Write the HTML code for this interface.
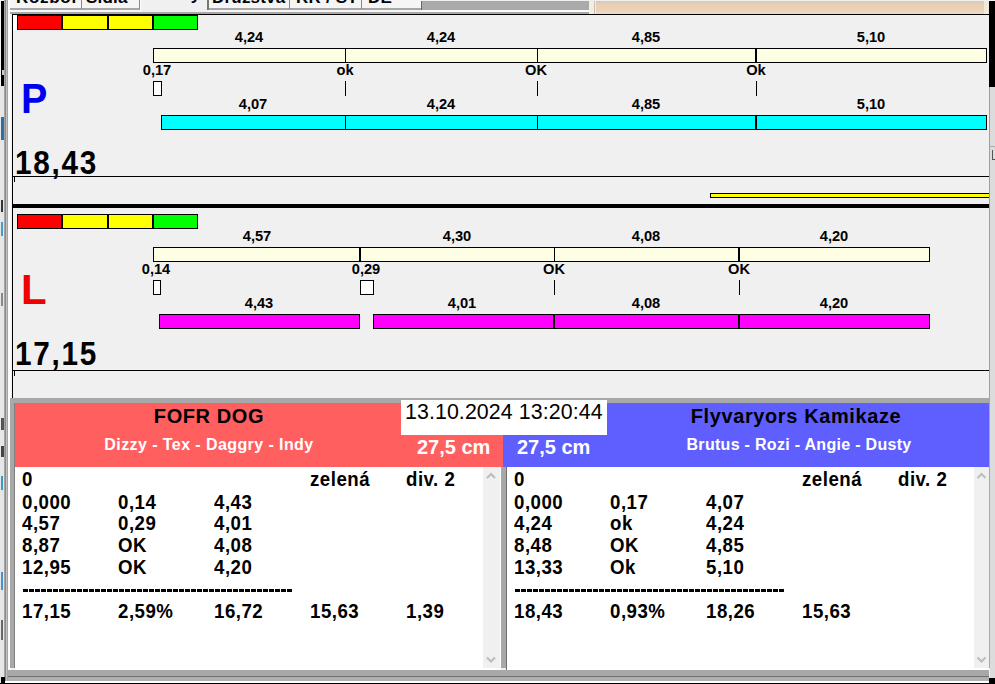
<!DOCTYPE html>
<html><head><meta charset="utf-8">
<style>
*{margin:0;padding:0;box-sizing:border-box}
html,body{width:995px;height:684px;overflow:hidden;background:#f0f0f0;font-family:"Liberation Sans",sans-serif;position:relative}
.a{position:absolute}
.t{position:absolute;white-space:nowrap;font-weight:bold;color:#000}
.c{text-align:center}
.lb{font-size:15.2px;line-height:14.67px;width:80px;text-align:center;transform:scaleX(0.965);transform-origin:50% 0}
.bar{position:absolute;border:1px solid #000}
.dv{position:absolute;width:2px;background:#000}
.tk{position:absolute;width:1px;background:#000}
.li{font-size:18.67px;line-height:20.56px;letter-spacing:0.5px;transform:scaleY(1.07);transform-origin:0 0}
.ds{letter-spacing:-0.22px}
</style></head><body>

<!-- left background strip -->
<div class="a" style="left:0;top:0;width:12px;height:684px;background:#f2f2f2"></div>
<div class="a" style="left:0;top:86px;width:5px;height:598px;background:#e4e6e8"></div>
<div class="a" style="left:1px;top:1px;width:4px;height:85px;background:#000"></div>
<div class="a" style="left:2px;top:70px;width:2px;height:5px;background:#ccc"></div>
<div class="a" style="left:1px;top:117px;width:3px;height:23px;background:#2b6fa8"></div>
<div class="a" style="left:1px;top:200px;width:2px;height:12px;background:#333"></div>
<div class="a" style="left:1px;top:222px;width:2px;height:14px;background:#4a9ad0"></div>
<div class="a" style="left:1px;top:293px;width:2px;height:13px;background:#888"></div>
<div class="a" style="left:1px;top:418px;width:3px;height:12px;background:#555"></div>
<div class="a" style="left:1px;top:446px;width:3px;height:11px;background:#444"></div>
<div class="a" style="left:1px;top:476px;width:2px;height:14px;background:#3a9ac0"></div>
<div class="a" style="left:1px;top:572px;width:2px;height:18px;background:#4a90d0"></div>
<div class="a" style="left:1px;top:620px;width:2px;height:20px;background:#666"></div>
<div class="a" style="left:4px;top:0;width:4px;height:684px;background:#a4a4a4"></div>
<div class="a" style="left:5px;top:0;width:1px;height:684px;background:#8c8c8c"></div>
<div class="a" style="left:6px;top:0;width:1px;height:684px;background:#c0c0c0"></div>
<div class="a" style="left:8px;top:0;width:3px;height:684px;background:#fbfbfb"></div>

<!-- tabs -->
<div class="a" style="left:10px;top:0;width:411px;height:12px;background:#f5f5f5"></div>
<div class="a" style="left:10px;top:8px;width:130px;height:2px;background:#a6a6a6"></div>
<div class="a" style="left:208px;top:8px;width:213px;height:2px;background:#a6a6a6"></div>
<div class="a" style="left:140px;top:0;width:68px;height:12px;background:#f0f0f0"></div>
<div class="a" style="left:140px;top:0;width:1px;height:12px;background:#fff"></div>
<div class="a" style="left:81px;top:0;width:1px;height:9px;background:#888"></div>
<div class="a" style="left:139px;top:0;width:1px;height:9px;background:#888"></div>
<div class="a" style="left:207px;top:0;width:2px;height:10px;background:#777"></div>
<div class="a" style="left:289px;top:0;width:1px;height:9px;background:#888"></div>
<div class="a" style="left:361px;top:0;width:1px;height:9px;background:#888"></div>
<div class="a" style="left:421px;top:1px;width:1px;height:9px;background:#666"></div>
<div class="a" style="left:422px;top:1px;width:167px;height:9px;background:#aaaaaa"></div>
<div class="a" style="left:421px;top:10px;width:175px;height:2px;background:#fafafa"></div>
<div class="t" style="left:16px;top:-11px;font-size:17px;line-height:17px;letter-spacing:0.7px">Rozbor</div>
<div class="t" style="left:86px;top:-11px;font-size:17px;line-height:17px;letter-spacing:0.2px">Sídla</div>
<div class="t" style="left:150px;top:-14px;font-size:17px;line-height:17px;letter-spacing:0.5px">Dráhy</div>
<div class="t" style="left:212px;top:-11px;font-size:17px;line-height:17px;letter-spacing:0.2px">Družstva</div>
<div class="t" style="left:296px;top:-11px;font-size:17px;line-height:17px;letter-spacing:0.2px">RR / ST</div>
<div class="t" style="left:368px;top:-11px;font-size:17px;line-height:17px;letter-spacing:0.2px">DE</div>

<!-- panel frame -->
<div class="a" style="left:10px;top:12px;width:980px;height:2px;background:#a8a8a8"></div>
<div class="a" style="left:589px;top:1px;width:7px;height:13px;background:#f4eee0"></div>
<div class="a" style="left:594px;top:1px;width:1px;height:13px;background:#c8c0b0"></div>
<div class="a" style="left:596px;top:1px;width:388px;height:13px;background:linear-gradient(#dcc6b8,#ead0b4 35%,#ecd2b4 65%,#e8dcd0)"></div>
<div class="a" style="left:984px;top:1px;width:5px;height:13px;background:#f0ead8"></div>
<div class="a" style="left:12px;top:14px;width:977px;height:1px;background:#000"></div>
<div class="a" style="left:12px;top:14px;width:1px;height:384px;background:#000"></div>
<div class="a" style="left:13px;top:15px;width:4px;height:15px;background:#fff"></div>
<div class="a" style="left:989px;top:14px;width:1px;height:384px;background:#a0a0a0"></div>

<!-- right black strip -->
<div class="a" style="left:989px;top:1px;width:6px;height:86px;background:#000"></div>
<div class="a" style="left:990px;top:87px;width:5px;height:597px;background:#dcdcdc"></div>
<div class="a" style="left:990px;top:146px;width:5px;height:1px;background:#aaa"></div>
<div class="a" style="left:992px;top:150px;width:1px;height:10px;background:#555"></div>
<div class="a" style="left:992px;top:159px;width:3px;height:1px;background:#555"></div>

<!-- ===== Panel P ===== -->
<div class="bar" style="left:17px;top:15px;width:45px;height:15px;background:#ff0000"></div>
<div class="bar" style="left:62px;top:15px;width:46px;height:15px;background:#ffff00"></div>
<div class="bar" style="left:108px;top:15px;width:45px;height:15px;background:#ffff00"></div>
<div class="bar" style="left:153px;top:15px;width:45px;height:15px;background:#00ff00"></div>

<div class="t lb" style="left:209px;top:30px">4,24</div>
<div class="t lb" style="left:401px;top:30px">4,24</div>
<div class="t lb" style="left:606px;top:30px">4,85</div>
<div class="t lb" style="left:831px;top:30px">5,10</div>
<div class="bar" style="left:153px;top:48px;width:834px;height:15px;background:#fefee4"></div>
<div class="dv" style="left:345px;top:48px;height:15px;width:1px"></div>
<div class="dv" style="left:537px;top:48px;height:15px;width:1px"></div>
<div class="dv" style="left:755px;top:48px;height:15px"></div>

<div class="t lb" style="left:117px;top:63px">0,17</div>
<div class="t lb" style="left:305px;top:63px">ok</div>
<div class="t lb" style="left:496px;top:63px">OK</div>
<div class="t lb" style="left:716px;top:63px">Ok</div>
<div class="bar" style="left:153px;top:81px;width:9px;height:15px;background:#fff"></div>
<div class="tk" style="left:345px;top:81px;height:15px"></div>
<div class="tk" style="left:537px;top:81px;height:15px"></div>
<div class="tk" style="left:756px;top:81px;height:15px"></div>

<div class="t lb" style="left:213px;top:97px">4,07</div>
<div class="t lb" style="left:401px;top:97px">4,24</div>
<div class="t lb" style="left:606px;top:97px">4,85</div>
<div class="t lb" style="left:831px;top:97px">5,10</div>
<div class="bar" style="left:161px;top:115px;width:826px;height:15px;background:#00ffff"></div>
<div class="dv" style="left:345px;top:115px;height:15px;width:1px"></div>
<div class="dv" style="left:537px;top:115px;height:15px;width:1px"></div>
<div class="dv" style="left:755px;top:115px;height:15px"></div>

<div class="t" style="left:21px;top:77px;font-size:42px;line-height:42px;transform:scale(0.94,1.03);transform-origin:0 0;color:#0000f0">P</div>
<div class="t" style="left:15px;top:146px;font-size:33px;line-height:33px;letter-spacing:1.9px;transform:scaleX(0.9);transform-origin:0 0">18,43</div>

<div class="a" style="left:13px;top:176px;width:976px;height:1px;background:#000"></div>
<div class="a" style="left:14px;top:177px;width:1px;height:5px;background:#000"></div>
<div class="bar" style="left:710px;top:193px;width:279px;height:5px;background:#ffff00;border-right:none"></div>
<div class="a" style="left:13px;top:204px;width:976px;height:4px;background:#000"></div>

<!-- ===== Panel L ===== -->
<div class="bar" style="left:17px;top:214px;width:45px;height:15px;background:#ff0000"></div>
<div class="bar" style="left:62px;top:214px;width:46px;height:15px;background:#ffff00"></div>
<div class="bar" style="left:108px;top:214px;width:45px;height:15px;background:#ffff00"></div>
<div class="bar" style="left:153px;top:214px;width:45px;height:15px;background:#00ff00"></div>

<div class="t lb" style="left:217px;top:229px">4,57</div>
<div class="t lb" style="left:417px;top:229px">4,30</div>
<div class="t lb" style="left:606px;top:229px">4,08</div>
<div class="t lb" style="left:794px;top:229px">4,20</div>
<div class="bar" style="left:153px;top:247px;width:777px;height:15px;background:#fefee4"></div>
<div class="dv" style="left:359px;top:247px;height:15px"></div>
<div class="dv" style="left:554px;top:247px;height:15px;width:1px"></div>
<div class="dv" style="left:738px;top:247px;height:15px"></div>

<div class="t lb" style="left:116px;top:262px">0,14</div>
<div class="t lb" style="left:326px;top:262px">0,29</div>
<div class="t lb" style="left:514px;top:262px">OK</div>
<div class="t lb" style="left:699px;top:262px">OK</div>
<div class="bar" style="left:153px;top:280px;width:8px;height:15px;background:#fff"></div>
<div class="bar" style="left:360px;top:280px;width:14px;height:15px;background:#fff"></div>
<div class="tk" style="left:554px;top:280px;height:15px"></div>
<div class="tk" style="left:739px;top:280px;height:15px"></div>

<div class="t lb" style="left:219px;top:296px">4,43</div>
<div class="t lb" style="left:422px;top:296px">4,01</div>
<div class="t lb" style="left:606px;top:296px">4,08</div>
<div class="t lb" style="left:794px;top:296px">4,20</div>
<div class="bar" style="left:159px;top:314px;width:201px;height:15px;background:#ff00ff"></div>
<div class="bar" style="left:373px;top:314px;width:557px;height:15px;background:#ff00ff"></div>
<div class="dv" style="left:553px;top:314px;height:15px"></div>
<div class="dv" style="left:738px;top:314px;height:15px"></div>

<div class="t" style="left:21px;top:268px;font-size:42px;line-height:42px;transform:scale(1,1.03);transform-origin:0 0;color:#f00000">L</div>
<div class="t" style="left:15px;top:337px;font-size:33px;line-height:33px;letter-spacing:1.9px;transform:scaleX(0.9);transform-origin:0 0">17,15</div>

<div class="a" style="left:13px;top:370px;width:976px;height:1px;background:#000"></div>
<div class="a" style="left:14px;top:371px;width:1px;height:5px;background:#000"></div>

<!-- ===== Bottom section ===== -->
<div class="a" style="left:10px;top:398px;width:980px;height:270px;background:#a8a8a8"></div>
<div class="a" style="left:15px;top:403px;width:488px;height:64px;background:#ff5f5f"></div>
<div class="a" style="left:503px;top:403px;width:486px;height:64px;background:#5f5fff"></div>
<div class="a" style="left:401px;top:400px;width:206px;height:35px;background:#fff"></div>

<div class="t c" style="left:15px;width:386px;top:405.5px;font-size:20px;line-height:20px;letter-spacing:0.6px;padding-left:2px">FOFR DOG</div>
<div class="t c" style="left:16px;width:386px;top:437px;font-size:16px;line-height:16px;letter-spacing:0.42px;color:#fff">Dizzy - Tex - Daggry - Indy</div>
<div class="t c" style="left:605px;width:382px;top:405.5px;font-size:20px;line-height:20px;letter-spacing:0.6px">Flyvaryors Kamikaze</div>
<div class="t c" style="left:608px;width:382px;top:437px;font-size:16px;line-height:16px;letter-spacing:0.3px;color:#fff">Brutus - Rozi - Angie - Dusty</div>
<div class="t" style="left:405px;top:401px;letter-spacing:0.1px;font-size:21.33px;line-height:22px;font-weight:normal">13.10.2024 13:20:44</div>
<div class="t" style="left:417px;top:437px;font-size:20px;line-height:20px;color:#fff">27,5 cm</div>
<div class="t" style="left:517px;top:437px;font-size:20px;line-height:20px;color:#fff">27,5 cm</div>

<!-- lists -->
<div class="a" style="left:15px;top:467px;width:486px;height:203px;background:#fff"></div>
<div class="a" style="left:483px;top:467px;width:17px;height:201px;background:#f0f0f0"></div>
<div class="a" style="left:507px;top:467px;width:482px;height:203px;background:#fff"></div>
<div class="a" style="left:974px;top:467px;width:15px;height:201px;background:#f0f0f0"></div>
<div class="a" style="left:506px;top:467px;width:1px;height:203px;background:#707070"></div>
<div class="a" style="left:14px;top:403px;width:1px;height:265px;background:#808080"></div>
<div class="a" style="left:8px;top:670px;width:981px;height:6px;background:#a8a8a8"></div>
<div class="a" style="left:8px;top:676px;width:981px;height:1px;background:#707070"></div>
<div class="a" style="left:8px;top:677px;width:981px;height:4px;background:#b0b0b0"></div>
<div class="a" style="left:4px;top:681px;width:985px;height:2px;background:#fff"></div>
<div class="a" style="left:0px;top:683px;width:995px;height:1px;background:#000"></div>
<div class="a" style="left:989px;top:678px;width:6px;height:6px;background:#000"></div>
<div class="a" style="left:1px;top:677px;width:4px;height:7px;background:#000"></div>

<svg class="a" style="left:483px;top:467px" width="17" height="201">
 <polyline points="4,11 8,7 12,11" fill="none" stroke="#bcbcbc" stroke-width="2"/>
 <polyline points="4,190.5 8,194.5 12,190.5" fill="none" stroke="#bcbcbc" stroke-width="2"/>
</svg>
<svg class="a" style="left:974px;top:467px" width="15" height="201">
 <polyline points="3.5,11 7.5,7 11.5,11" fill="none" stroke="#bcbcbc" stroke-width="2"/>
 <polyline points="3.5,190.5 7.5,194.5 11.5,190.5" fill="none" stroke="#bcbcbc" stroke-width="2"/>
</svg>

<div class="t li" style="left:22px;top:469px">0<br>0,000<br>4,57<br>8,87<br>12,95<br><br>17,15</div>
<div class="t li" style="left:118px;top:469px"><br>0,14<br>0,29<br>OK<br>OK<br><br>2,59%</div>
<div class="t li" style="left:214px;top:469px"><br>4,43<br>4,01<br>4,08<br>4,20<br><br>16,72</div>
<div class="t li" style="left:310px;top:469px">zelená<br><br><br><br><br><br>15,63</div>
<div class="t li" style="left:406px;top:469px">div. 2<br><br><br><br><br><br>1,39</div>
<div class="a" style="left:23px;top:589px;width:270px;height:3px;background:repeating-linear-gradient(to right,#000 0 5px,transparent 5px 6px)"></div>

<div class="t li" style="left:514px;top:469px">0<br>0,000<br>4,24<br>8,48<br>13,33<br><br>18,43</div>
<div class="t li" style="left:610px;top:469px"><br>0,17<br>ok<br>OK<br>Ok<br><br>0,93%</div>
<div class="t li" style="left:706px;top:469px"><br>4,07<br>4,24<br>4,85<br>5,10<br><br>18,26</div>
<div class="t li" style="left:802px;top:469px">zelená<br><br><br><br><br><br>15,63</div>
<div class="t li" style="left:898px;top:469px">div. 2</div>
<div class="a" style="left:515px;top:589px;width:270px;height:3px;background:repeating-linear-gradient(to right,#000 0 5px,transparent 5px 6px)"></div>

</body></html>
